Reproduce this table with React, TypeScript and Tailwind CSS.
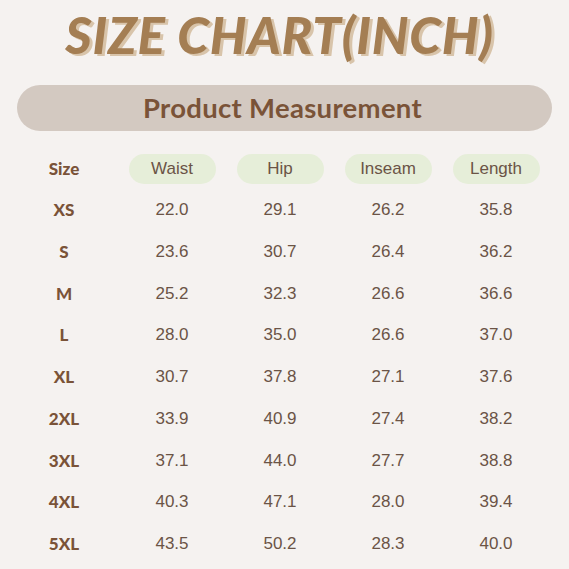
import React from 'react';

const rows = [
  { size: 'XS', waist: '22.0', hip: '29.1', inseam: '26.2', length: '35.8' },
  { size: 'S', waist: '23.6', hip: '30.7', inseam: '26.4', length: '36.2' },
  { size: 'M', waist: '25.2', hip: '32.3', inseam: '26.6', length: '36.6' },
  { size: 'L', waist: '28.0', hip: '35.0', inseam: '26.6', length: '37.0' },
  { size: 'XL', waist: '30.7', hip: '37.8', inseam: '27.1', length: '37.6' },
  { size: '2XL', waist: '33.9', hip: '40.9', inseam: '27.4', length: '38.2' },
  { size: '3XL', waist: '37.1', hip: '44.0', inseam: '27.7', length: '38.8' },
  { size: '4XL', waist: '40.3', hip: '47.1', inseam: '28.0', length: '39.4' },
  { size: '5XL', waist: '43.5', hip: '50.2', inseam: '28.3', length: '40.0' },
];

const headers = ['Waist', 'Hip', 'Inseam', 'Length'];

const valueFont = { fontFamily: '"Liberation Sans", Arial, sans-serif' };

const App: React.FC = () => (
  <div
    className="w-[569px] h-[569px] bg-[#f5f2f0] overflow-hidden"
    style={{ fontFamily: 'Lato, "Open Sans", sans-serif' }}
  >
    <div className="h-[80px] flex justify-center pt-[6px] pr-[10px]">
      <h1
        className="text-[51px] leading-[58px] font-black italic text-[#a47e53] tracking-[0.8px] whitespace-nowrap"
        style={{ textShadow: '3px 2px 0 #d8c4aa' }}
      >
        SIZE CHART(INCH)
      </h1>
    </div>

    <div className="mx-[17px] mt-[5px] h-[46px] rounded-full bg-[#d3c9c1] flex items-center justify-center">
      <span className="text-[27.5px] font-bold text-[#7a5338] tracking-[0.3px] pr-[4px]">Product Measurement</span>
    </div>

    <div className="ml-[10px] w-[540px] mt-[18px]">
      <div className="grid grid-cols-5 h-[40px] items-center">
        <div className="text-center text-[17px] font-black text-[#7a5338]">Size</div>
        {headers.map((h) => (
          <div key={h} className="flex justify-center">
            <div
              className="w-[87px] h-[30px] rounded-full bg-[#e6eed9] flex items-center justify-center text-[17px] text-[#6b5446]"
              style={valueFont}
            >
              {h}
            </div>
          </div>
        ))}
      </div>
      {rows.map((r) => (
        <div key={r.size} className="grid grid-cols-5 h-[41.75px] items-center text-[17px]">
          <div className="text-center font-black text-[#7a5338]">{r.size}</div>
          <div className="text-center text-[#6b5446]" style={valueFont}>{r.waist}</div>
          <div className="text-center text-[#6b5446]" style={valueFont}>{r.hip}</div>
          <div className="text-center text-[#6b5446]" style={valueFont}>{r.inseam}</div>
          <div className="text-center text-[#6b5446]" style={valueFont}>{r.length}</div>
        </div>
      ))}
    </div>
  </div>
);

export default App;
